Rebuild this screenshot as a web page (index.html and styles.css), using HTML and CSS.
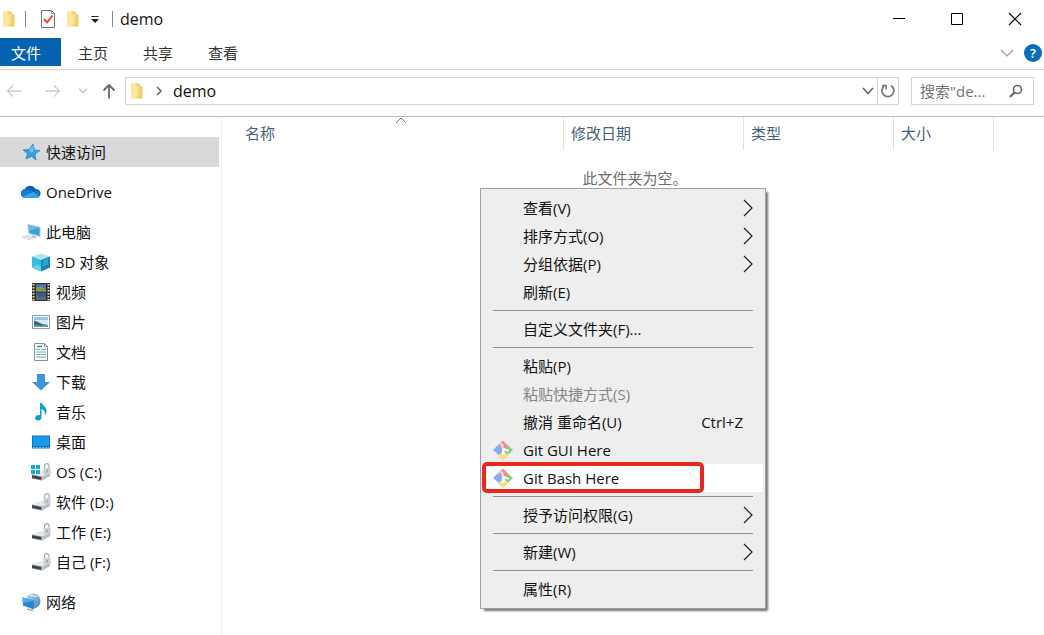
FILE: index.html
```html
<!DOCTYPE html>
<html lang="zh-CN">
<head>
    <meta charset="UTF-8">
    <meta name="viewport" content="width=device-width, initial-scale=1.0">
    <title>demo</title>
    <link rel="stylesheet" href="styles.css">
</head>
<body>

    <!-- shared icons -->
    <svg class="defs" aria-hidden="true">
        <defs>
            <linearGradient id="silver" x1="0" y1="0" x2="1" y2="1">
                <stop offset="0" stop-color="#f4f6f7"/>
                <stop offset="1" stop-color="#9aa3aa"/>
            </linearGradient>
            <linearGradient id="globe" x1="0" y1="0" x2="1" y2="1">
                <stop offset="0" stop-color="#c3dff0"/>
                <stop offset="1" stop-color="#3e7fae"/>
            </linearGradient>
            <linearGradient id="gold" x1="0" y1="0" x2="1" y2="0">
                <stop offset="0" stop-color="#fdeaa8"/>
                <stop offset="1" stop-color="#f3cd68"/>
            </linearGradient>
        </defs>
        <symbol id="folder" viewBox="0 0 14 18">
            <path d="M1 1.500h8.500l.5 2.500h2.500v12.500H1z" fill="#f3cf66"/>
            <path d="M1 1.500h5l1 15H1z" fill="#fce7a0"/>
            <path d="M6 4.500l4-2v11l-3.500 3z" fill="url(#gold)"/>
        </symbol>
        <symbol id="drive" viewBox="0 0 20 20">
            <path d="M1 12.500l8-3 10-1V14l-8 4.500-10-2z" fill="url(#silver)"/>
            <path d="M1 12.500l8-3 10-1v2l-8 4z" fill="#e6eaec"/>
            <path d="M1 12.500l10 2v4l-10-2z" fill="#9ba2a6"/>
            <path d="M1 13.300l9 1.800v2.600l-9-1.800z" fill="#3d4246"/>
            <path d="M13.500 6.500V4a2.300 2.300 0 0 1 4.600 0v2.500" fill="none" stroke="#a9adb0" stroke-width="1.200"/>
            <path d="M12.500 6h7v6l-3 1-4-1z" fill="#c9cfd3"/>
            <path d="M15.500 8h1v2.500h-1z" fill="#858d92"/>
        </symbol>
        <symbol id="git" viewBox="0 0 20 20">
            <path d="M4.500 5.500h2L9.500 9v4L5.500 15 0 10z" fill="#86aef2"/>
            <path d="M5.500 4.500L10 .5l7 7-4 3-3-3.500-2 .5z" fill="#ec9096"/>
            <path d="M15.500 6L20 10l-5 5-3.500-3 1-2.500z" fill="#86d276"/>
            <path d="M5 15.500l4.500-3.500 5.500 3.500L10 20z" fill="#f8dd79"/>
            <path d="M7.500 3.500l3 3" stroke="#fff" stroke-width="1.200"/>
            <path d="M10 9v5M11 8.500l3 2" fill="none" stroke="#fff" stroke-width="1.500"/>
            <circle cx="10" cy="13.500" r="1.500" fill="#fff"/>
            <circle cx="14.500" cy="10.500" r="1.300" fill="#fff"/>
        </symbol>
        <symbol id="more" viewBox="0 0 10 18">
            <path d="M1 1l8 8-8 8" fill="none" stroke="#222" stroke-width="1.200"/>
        </symbol>
        <symbol id="down" viewBox="0 0 12 8">
            <path d="M1 1l5 5.500L11 1" fill="none" stroke="currentColor" stroke-width="1.600"/>
        </symbol>
    </svg>

    <div class="window">
        <header class="titlebar">
            <svg class="folder" aria-hidden="true"><use href="#folder"/></svg>
            <span class="divider"></span>
            <button class="quick" aria-label="属性">
                <svg width="16" height="20" viewBox="0 0 16 20">
                    <path d="M1.500 1.500h10l3 3v14h-13z" fill="#fff" stroke="#777"/>
                    <path d="M11.500 1.500v3h3" fill="none" stroke="#888"/>
                    <path d="M4 10l3 3.500 5.500-7" fill="none" stroke="#d9502e" stroke-width="2"/>
                </svg>
            </button>
            <button class="quick" aria-label="新建文件夹"><svg class="folder"><use href="#folder"/></svg></button>
            <button class="quick" aria-label="自定义快速访问工具栏">
                <svg width="10" height="8" viewBox="0 0 10 8"><path d="M1.500 1.500h7" stroke="#222"/><path d="M1 4h8L5 8z" fill="#222"/></svg>
            </button>
            <span class="divider title-divider"></span>
            <h1>demo</h1>
            <div class="controls">
                <button aria-label="最小化"><svg width="14" height="14"><path d="M1 6.500h12" stroke="#000"/></svg></button>
                <button aria-label="最大化"><svg width="14" height="14"><path d="M1.500 1.500h11v11h-11z" fill="none" stroke="#000"/></svg></button>
                <button aria-label="关闭"><svg width="14" height="14"><path d="M1 1l12 12M13 1L1 13" stroke="#000" stroke-width="1.100"/></svg></button>
            </div>
        </header>

        <div class="tabs">
            <button class="tab file">文件</button>
            <button class="tab">主页</button>
            <button class="tab">共享</button>
            <button class="tab">查看</button>
            <div class="tabs-right">
                <button aria-label="展开功能区"><svg width="14" height="8" viewBox="0 0 14 8"><path d="M1 1l6 6 6-6" fill="none" stroke="#999" stroke-width="1.200"/></svg></button>
                <button class="help" aria-label="帮助">?</button>
            </div>
        </div>

        <div class="toolbar">
            <div class="history">
                <button aria-label="后退"><svg width="16" height="14" viewBox="0 0 16 14"><path d="M15.500 7H1.500M7 1.500L1.500 7 7 12.500" fill="none" stroke="#ccc" stroke-width="1.300"/></svg></button>
                <button aria-label="前进"><svg width="16" height="14" viewBox="0 0 16 14"><path d="M.5 7h14M9 1.500L14.500 7 9 12.500" fill="none" stroke="#ccc" stroke-width="1.300"/></svg></button>
                <button class="recent" aria-label="最近浏览的位置"><svg width="10" height="6"><use href="#down"/></svg></button>
                <button aria-label="上移"><svg width="14" height="16" viewBox="0 0 14 16"><path d="M7 15.500V2M1.500 7.500L7 2l5.500 5.500" fill="none" stroke="#666" stroke-width="1.800"/></svg></button>
            </div>
            <div class="address">
                <svg class="folder" aria-hidden="true"><use href="#folder"/></svg>
                <svg class="crumb-arrow" width="7" height="10" viewBox="0 0 7 10" aria-hidden="true"><path d="M1 1l4 4-4 4" fill="none" stroke="#666" stroke-width="1.600"/></svg>
                <button class="crumb">demo</button>
                <button class="address-drop" aria-label="以前的位置"><svg width="12" height="8"><use href="#down"/></svg></button>
                <button class="refresh" aria-label="刷新">
                    <svg width="16" height="16" viewBox="0 0 16 16"><path d="M11 2.500A6 6 0 1 1 4 3" fill="none" stroke="#777" stroke-width="1.800"/><path d="M2 2.500h4v4" fill="none" stroke="#777" stroke-width="1.600"/></svg>
                </button>
            </div>
            <div class="search">
                <input type="text" aria-label="搜索" placeholder='搜索"de...'>
                <svg width="14" height="14" viewBox="0 0 14 14" aria-hidden="true"><circle cx="8.500" cy="5.500" r="4" fill="none" stroke="#666" stroke-width="1.600"/><path d="M5.500 8.500L1 13" stroke="#666" stroke-width="2.200"/></svg>
            </div>
        </div>

        <div class="content">
            <nav class="sidebar">
                <a class="place active" href="#">
                    <svg viewBox="0 0 20 20"><path d="M12 2l1.500 6 5.500.5-5 3.500 1 6-4.500-3.500L5 17l1.500-5.500L2 8l6-.5z" fill="#3aa0e0" stroke="#2489c9" stroke-width=".8"/><path d="M12 3l1 5.500-3 2.500-2-3z" fill="#6cc0f0"/></svg>
                    快速访问
                </a>
                <a class="place" href="#">
                    <svg viewBox="0 0 20 20"><path d="M4.500 16a4.500 4.500 0 0 1-.8-8.900A6 6 0 0 1 14.500 7a4.500 4.500 0 0 1 1 9z" fill="#0f62ae"/><path d="M6 7.500c3-.5 4.500 1.500 6.500 2.500l3-1.200a3.700 3.700 0 0 1 .5 7.200H4.500A4.400 4.400 0 0 1 .6 9.500C2 8 4 7.500 6 7.500z" fill="#157bcd"/><path d="M1.500 14.500L12.500 10l6 4.800c-.6.800-1.500 1.200-2.500 1.200H4.500c-1.300 0-2.300-.6-3-1.500z" fill="#32a6e8"/></svg>
                    OneDrive
                </a>
                <div class="group">
                    <a class="place" href="#">
                        <svg viewBox="0 0 20 20"><path d="M6.500 2L19.500 5v10L7.500 12z" fill="#9cc7dd"/><path d="M7.500 3.300l11 2.500v7.700l-10-2.600z" fill="#3d9fd9"/><path d="M7.500 3.300l11 2.500-10.300 3z" fill="#66bbe8"/><path d="M11 13.500l4 1v1.500l-4-.8z" fill="#a5b3bc"/><path d="M1.500 15l5-1.500 7 2-5.500 2.300z" fill="#e4e9ec" stroke="#b8bfc4" stroke-width=".6"/></svg>
                        此电脑
                    </a>
                    <a class="place sub" href="#">
                        <svg viewBox="0 0 20 20"><path d="M1 4.500L10 1.500l9 3L10 9z" fill="#a5e8f0"/><path d="M1 4.500L10 8v11.500L1 15.500z" fill="#3bbbd8"/><path d="M10 8l9-3.500v11L10 19.500z" fill="#1486b2"/><path d="M1 15.500l5-3 4 2v5z" fill="#64d1e4"/><path d="M12 8.500l5-2v6l-5 2z" fill="#2ea5cb"/></svg>
                        3D 对象
                    </a>
                    <a class="place sub" href="#">
                        <svg viewBox="0 0 20 20"><path d="M1 1h18v18H1z" fill="#33302c"/><path d="M5 2h10v7.500H5z" fill="#4970b8"/><path d="M5 6l4-2 6 3v2.500H5z" fill="#889b42"/><path d="M5 10.500h10V18H5z" fill="#3459a8"/><path d="M5 13l5 2 5-1v4H5z" fill="#536d62"/><path d="M2.500 2v17M17.500 2v17" stroke="#e9dfc5" stroke-width="2" stroke-dasharray="1.500 1.500"/></svg>
                        视频
                    </a>
                    <a class="place sub" href="#">
                        <svg viewBox="0 0 20 20"><path d="M1.500 3.500h17v13h-17z" fill="#fff" stroke="#8e9da5"/><path d="M3 5h14v10H3z" fill="#d5eaf5"/><path d="M3 5h14v3H3z" fill="#94c8ea"/><path d="M3 8.500l4 1.500 4 2 6 1v1H3z" fill="#376a76"/><path d="M3 13l7 .5 7-.5v2H3z" fill="#639cbd"/></svg>
                        图片
                    </a>
                    <a class="place sub" href="#">
                        <svg viewBox="0 0 20 20"><path d="M3.500 1.500h10l3 3v14h-13z" fill="#fff" stroke="#80939d"/><path d="M13.500 1.500v3h3" fill="none" stroke="#80939d"/><path d="M5 7.500h4M10 7.500h5M5 10h10M5 12.500h10M5 15h10" stroke="#6da6c1" stroke-width="1.200"/><path d="M6 4.500h5" stroke="#2f86b1" stroke-width="1.500"/></svg>
                        文档
                    </a>
                    <a class="place sub" href="#">
                        <svg viewBox="0 0 20 20"><path d="M6 2h8v8h5l-9 8.500L1 10h5z" fill="#3f95da"/></svg>
                        下载
                    </a>
                    <a class="place sub" href="#">
                        <svg viewBox="0 0 20 20"><path d="M9 1h2c.5 3 5.500 4 4.500 9-.2 1.400-1 2.500-2 3 1-3.500-.5-5-3-6v8c0 2-1.500 3.500-3.500 3.500S4 17.500 4 16s1.500-3 3.500-3c.6 0 1 .1 1.500.3z" fill="#159bd1"/></svg>
                        音乐
                    </a>
                    <a class="place sub" href="#">
                        <svg viewBox="0 0 20 20"><path d="M1 3.500h18v13H1z" fill="#1670b8"/><path d="M2 4.500h16V14H2z" fill="#149be9"/><path d="M2 15.500h16" stroke="#67c1ef" stroke-dasharray="2 1"/></svg>
                        桌面
                    </a>
                    <a class="place sub" href="#">
                        <svg viewBox="0 0 20 20"><use href="#drive"/><path d="M0 3h4v4H0zM5 3h4v4H5zM0 8h4v4H0zM5 8h4v4H5z" fill="#16a9d3"/></svg>
                        OS (C:)
                    </a>
                    <a class="place sub" href="#"><svg viewBox="0 0 20 20"><use href="#drive"/></svg>软件 (D:)</a>
                    <a class="place sub" href="#"><svg viewBox="0 0 20 20"><use href="#drive"/></svg>工作 (E:)</a>
                    <a class="place sub" href="#"><svg viewBox="0 0 20 20"><use href="#drive"/></svg>自己 (F:)</a>
                </div>
                <a class="place" href="#">
                    <svg viewBox="0 0 20 20"><circle cx="12" cy="9" r="7.500" fill="url(#globe)"/><path d="M9 3c3 0 4 2 7 1" fill="none" stroke="#e0f0f8" stroke-width="1.200"/><path d="M1.500 5.500L13 8.500v9L2 13.500z" fill="#2786cf"/><path d="M1.500 5.500L13 8.500 1.800 11z" fill="#56ade6"/><path d="M6 17l6 1.800" stroke="#9eaab1" stroke-width="1.500"/></svg>
                    网络
                </a>
            </nav>

            <main class="files">
                <table>
                    <thead>
                        <tr>
                            <th class="name">
                                名称
                                <svg class="sort" width="12" height="7" viewBox="0 0 12 7" aria-hidden="true"><path d="M1 6l5-5 5 5" fill="none" stroke="#777"/></svg>
                            </th>
                            <th class="date">修改日期</th>
                            <th class="type">类型</th>
                            <th class="size">大小</th>
                            <td></td>
                        </tr>
                    </thead>
                </table>
                <p class="empty">此文件夹为空。</p>
            </main>
        </div>

        <div class="menu" role="menu">
            <button role="menuitem">查看(V)<svg class="more"><use href="#more"/></svg></button>
            <button role="menuitem">排序方式(O)<svg class="more"><use href="#more"/></svg></button>
            <button role="menuitem">分组依据(P)<svg class="more"><use href="#more"/></svg></button>
            <button role="menuitem">刷新(E)</button>
            <hr>
            <button role="menuitem">自定义文件夹(F)...</button>
            <hr>
            <button role="menuitem">粘贴(P)</button>
            <button role="menuitem" disabled>粘贴快捷方式(S)</button>
            <button role="menuitem">撤消 重命名(U)<span class="shortcut">Ctrl+Z</span></button>
            <button role="menuitem"><svg class="git"><use href="#git"/></svg>Git GUI Here</button>
            <button role="menuitem" class="selected"><svg class="git"><use href="#git"/></svg>Git Bash Here<span class="marker"></span></button>
            <hr>
            <button role="menuitem">授予访问权限(G)<svg class="more"><use href="#more"/></svg></button>
            <hr>
            <button role="menuitem">新建(W)<svg class="more"><use href="#more"/></svg></button>
            <hr>
            <button role="menuitem">属性(R)</button>
        </div>
    </div>

</body>
</html>
```
FILE: styles.css
```css
* {
    box-sizing: border-box;
}

body {
    margin: 0;
    background: #fff;
    color: #111;
    font-family: "Open Sans", "Noto Sans CJK SC", sans-serif;
    font-size: 15px;
    line-height: 20px;
}

button {
    display: flex;
    align-items: center;
    justify-content: center;
    padding: 0;
    border: none;
    background: none;
    color: inherit;
    font: inherit;
}

svg {
    display: block;
    flex-shrink: 0;
}

.defs {
    position: absolute;
    width: 0;
    height: 0;
}

.window {
    position: relative;
    display: flex;
    flex-direction: column;
    min-height: 100vh;
}

.folder {
    width: 14px;
    height: 18px;
}

/* title bar */
.titlebar {
    display: flex;
    align-items: center;
    height: 38px;
    padding-left: 2px;
}

.divider {
    width: 1px;
    height: 16px;
    margin: 0 14px 0 9px;
    background: #888;
}

.quick {
    margin-right: 10px;
}

.title-divider {
    margin: 0 7px 0 2px;
}

.titlebar h1 {
    margin: 0;
    font-size: 16px;
    font-weight: 400;
}

.controls {
    display: flex;
    margin-left: auto;
}

.controls button {
    width: 58px;
    height: 38px;
}

/* ribbon tabs */
.tabs {
    display: flex;
    height: 32px;
    padding-bottom: 3px;
    border-bottom: 1px solid #d5d5d5;
}

.tab {
    width: 65px;
    padding: 2px 1px 0 0;
    color: #333;
}

.tab.file {
    width: 61px;
    padding-right: 9px;
    background: #0563af;
    color: #fff;
}

.tabs-right {
    display: flex;
    align-items: center;
    gap: 10px;
    margin-left: auto;
    padding: 2px 2px 0 0;
}

.help {
    width: 18px;
    height: 18px;
    border-radius: 50%;
    background: #0b6cbd;
    color: #fff;
    font-size: 13px;
    font-weight: 600;
}

/* address row */
.toolbar {
    display: flex;
    align-items: center;
    height: 47px;
    padding: 0 10px 4px 6px;
    border-bottom: 1px solid #bbb;
}

.history {
    display: flex;
    align-items: center;
    width: 119px;
}

.history button {
    margin-right: 23px;
}

.history .recent {
    margin: 0 14px 0 -6px;
    color: #bbb;
}

.history button:last-child {
    margin-right: 0;
}

.address {
    display: flex;
    align-items: center;
    flex: 1;
    height: 28px;
    margin-right: 12px;
    padding-left: 4px;
    border: 1px solid #d5d5d5;
}

.crumb-arrow {
    margin: 0 10px 0 12px;
}

.crumb {
    font-size: 16px;
}

.address-drop {
    width: 18px;
    height: 26px;
    margin-left: auto;
    color: #666;
}

.refresh {
    width: 21px;
    height: 26px;
    border-left: 1px solid #d5d5d5;
}

.search {
    display: flex;
    align-items: center;
    width: 123px;
    height: 28px;
    padding: 0 10px 0 8px;
    border: 1px solid #d5d5d5;
}

.search input {
    flex: 1;
    min-width: 0;
    padding: 0;
    border: none;
    outline: none;
    background: none;
    font: inherit;
}

.search input::placeholder {
    color: #767676;
    opacity: 1;
}

/* navigation pane */
.content {
    display: flex;
    flex: 1;
}

.sidebar {
    display: flex;
    flex-direction: column;
    gap: 10px;
    width: 222px;
    padding: 20px 2px 18px 0;
    border-right: 1px solid #f0f0f0;
}

.place {
    display: flex;
    align-items: center;
    gap: 5px;
    height: 30px;
    padding-left: 21px;
    color: #111;
    text-decoration: none;
}

.place.sub {
    padding-left: 31px;
}

.place svg {
    width: 20px;
    height: 20px;
}

.place.active {
    background: #d9d9d9;
}

/* file list */
.files {
    flex: 1;
    padding-left: 16px;
}

.files table {
    width: 100%;
    border-collapse: separate;
    border-spacing: 0;
    table-layout: fixed;
}

.files th {
    position: relative;
    height: 33px;
    padding: 0 7px 2px;
    border-right: 1px solid #e2e2e2;
    color: #46607e;
    font-weight: 400;
    text-align: left;
}

.name {
    width: 326px;
}

.date {
    width: 180px;
}

.type {
    width: 150px;
}

.size {
    width: 100px;
}

.sort {
    position: absolute;
    top: 0;
    left: 50%;
    margin-left: -6px;
}

.empty {
    margin: 18px 12px 0 0;
    color: #6d6d6d;
    text-align: center;
}

/* context menu */
.menu {
    position: absolute;
    top: 188px;
    left: 480px;
    width: 286px;
    padding: 5px 2px;
    border: 1px solid #a0a0a0;
    background: #eee;
    box-shadow: 3px 3px 2px -1px rgba(0, 0, 0, 0.55);
}

.menu button {
    position: relative;
    justify-content: flex-start;
    width: 100%;
    height: 28px;
    padding: 0 20px 0 40px;
}

.menu button:disabled {
    color: #858585;
}

.menu .selected {
    background: #fff;
}

.menu hr {
    height: 1px;
    margin: 4px 10px;
    border: none;
    background: #919191;
}

.more {
    width: 10px;
    height: 18px;
    margin: 0 -10px 0 auto;
}

.shortcut {
    margin-left: auto;
}

.git {
    width: 20px;
    height: 20px;
    margin: 0 10px 0 -30px;
}

.marker {
    position: absolute;
    top: -2px;
    left: -1px;
    width: 222px;
    height: 31px;
    border: 4px solid #e8271f;
    border-radius: 5px;
}
```
